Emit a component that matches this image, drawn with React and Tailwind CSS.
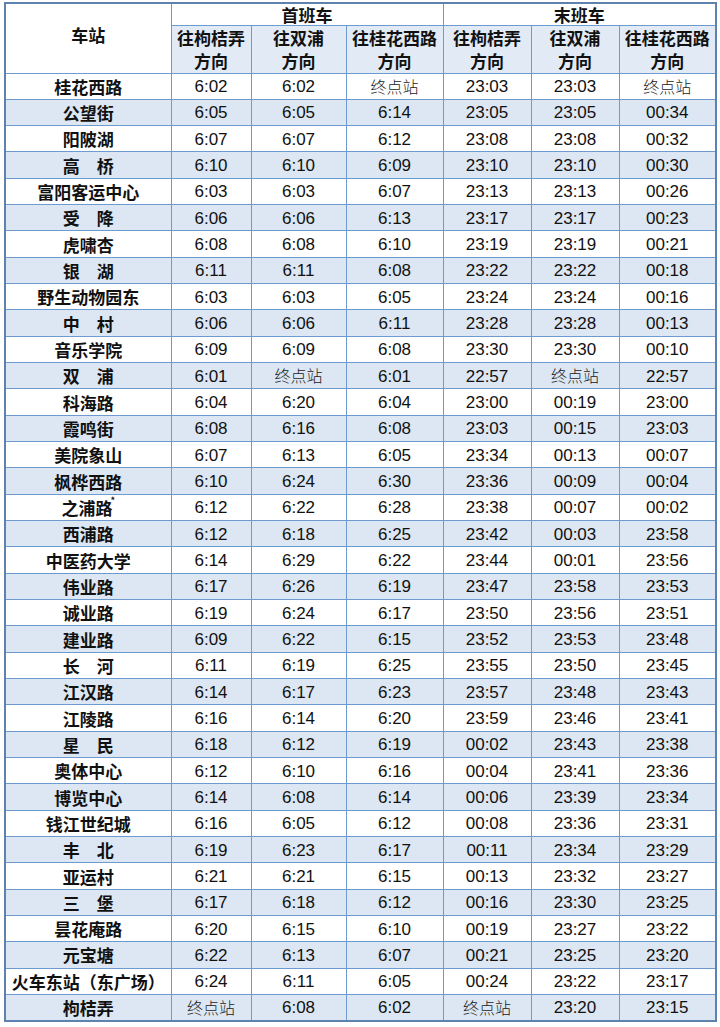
const rows = [
  ['桂花西路', '6:02', '6:02', '终点站', '23:03', '23:03', '终点站'],
  ['公望街', '6:05', '6:05', '6:14', '23:05', '23:05', '00:34'],
  ['阳陂湖', '6:07', '6:07', '6:12', '23:08', '23:08', '00:32'],
  ['高　桥', '6:10', '6:10', '6:09', '23:10', '23:10', '00:30'],
  ['富阳客运中心', '6:03', '6:03', '6:07', '23:13', '23:13', '00:26'],
  ['受　降', '6:06', '6:06', '6:13', '23:17', '23:17', '00:23'],
  ['虎啸杏', '6:08', '6:08', '6:10', '23:19', '23:19', '00:21'],
  ['银　湖', '6:11', '6:11', '6:08', '23:22', '23:22', '00:18'],
  ['野生动物园东', '6:03', '6:03', '6:05', '23:24', '23:24', '00:16'],
  ['中　村', '6:06', '6:06', '6:11', '23:28', '23:28', '00:13'],
  ['音乐学院', '6:09', '6:09', '6:08', '23:30', '23:30', '00:10'],
  ['双　浦', '6:01', '终点站', '6:01', '22:57', '终点站', '22:57'],
  ['科海路', '6:04', '6:20', '6:04', '23:00', '00:19', '23:00'],
  ['霞鸣街', '6:08', '6:16', '6:08', '23:03', '00:15', '23:03'],
  ['美院象山', '6:07', '6:13', '6:05', '23:34', '00:13', '00:07'],
  ['枫桦西路', '6:10', '6:24', '6:30', '23:36', '00:09', '00:04'],
  ['之浦路*', '6:12', '6:22', '6:28', '23:38', '00:07', '00:02'],
  ['西浦路', '6:12', '6:18', '6:25', '23:42', '00:03', '23:58'],
  ['中医药大学', '6:14', '6:29', '6:22', '23:44', '00:01', '23:56'],
  ['伟业路', '6:17', '6:26', '6:19', '23:47', '23:58', '23:53'],
  ['诚业路', '6:19', '6:24', '6:17', '23:50', '23:56', '23:51'],
  ['建业路', '6:09', '6:22', '6:15', '23:52', '23:53', '23:48'],
  ['长　河', '6:11', '6:19', '6:25', '23:55', '23:50', '23:45'],
  ['江汉路', '6:14', '6:17', '6:23', '23:57', '23:48', '23:43'],
  ['江陵路', '6:16', '6:14', '6:20', '23:59', '23:46', '23:41'],
  ['星　民', '6:18', '6:12', '6:19', '00:02', '23:43', '23:38'],
  ['奥体中心', '6:12', '6:10', '6:16', '00:04', '23:41', '23:36'],
  ['博览中心', '6:14', '6:08', '6:14', '00:06', '23:39', '23:34'],
  ['钱江世纪城', '6:16', '6:05', '6:12', '00:08', '23:36', '23:31'],
  ['丰　北', '6:19', '6:23', '6:17', '00:11', '23:34', '23:29'],
  ['亚运村', '6:21', '6:21', '6:15', '00:13', '23:32', '23:27'],
  ['三　堡', '6:17', '6:18', '6:12', '00:16', '23:30', '23:25'],
  ['昙花庵路', '6:20', '6:15', '6:10', '00:19', '23:27', '23:22'],
  ['元宝塘', '6:22', '6:13', '6:07', '00:21', '23:25', '23:20'],
  ['火车东站（东广场）', '6:24', '6:11', '6:05', '00:24', '23:22', '23:17'],
  ['枸桔弄', '终点站', '6:08', '6:02', '终点站', '23:20', '23:15'],
]

const dirs = ['往枸桔弄', '往双浦', '往桂花西路', '往枸桔弄', '往双浦', '往桂花西路']

const cjk = "font-['Noto_Sans_CJK_SC',sans-serif]"

function Cell({ value }) {
  if (value === '终点站') {
    return <span className={`${cjk} font-light text-[16px] text-[#222]`}>终点站</span>
  }
  return <span className="font-['Liberation_Sans',Arial,sans-serif]">{value}</span>
}

function StationName({ name }) {
  if (name.endsWith('*')) {
    return (
      <span>
        {name.slice(0, -1)}
        <sup className="text-[9px] align-super -ml-0.5">*</sup>
      </span>
    )
  }
  return name
}

export default function App() {
  return (
    <div className="bg-white w-[720px] h-[1027px] pt-[2px] pl-[4px]">
      <table className="table-fixed border-collapse text-[#111] text-[17px] leading-none w-[711px] border-2 border-[#5c82ad]">
        <colgroup>
          <col className="w-[166px]" />
          <col className="w-[80px]" />
          <col className="w-[95px]" />
          <col className="w-[97px]" />
          <col className="w-[88px]" />
          <col className="w-[88px]" />
          <col className="w-[97px]" />
        </colgroup>
        <thead className={`${cjk} font-bold`}>
          <tr className="h-[22px]">
            <th rowSpan={2} className="border border-[#6d9bd0] bg-white font-bold align-middle pb-2">车站</th>
            <th colSpan={3} className="border border-[#6d9bd0] bg-white font-bold">首班车</th>
            <th colSpan={3} className="border border-[#6d9bd0] bg-white font-bold">末班车</th>
          </tr>
          <tr className="h-[48px]">
            {dirs.map((d, i) => (
              <th key={i} className="border border-[#6d9bd0] bg-[#e2ebf5] font-bold px-0">
                <div className="leading-[23px]">{d}</div>
                <div className="leading-[23px]">方向</div>
              </th>
            ))}
          </tr>
        </thead>
        <tbody>
          {rows.map((r, i) => (
            <tr key={i} className={`h-[26.33px] ${i % 2 === 1 ? 'bg-[#dce7f3]' : 'bg-white'}`}>
              <td className={`${cjk} font-bold text-center border border-[#6d9bd0] p-0 whitespace-nowrap`}>
                <StationName name={r[0]} />
              </td>
              {r.slice(1).map((v, j) => (
                <td key={j} className="text-center border border-[#6d9bd0] p-0">
                  <Cell value={v} />
                </td>
              ))}
            </tr>
          ))}
        </tbody>
      </table>
    </div>
  )
}
